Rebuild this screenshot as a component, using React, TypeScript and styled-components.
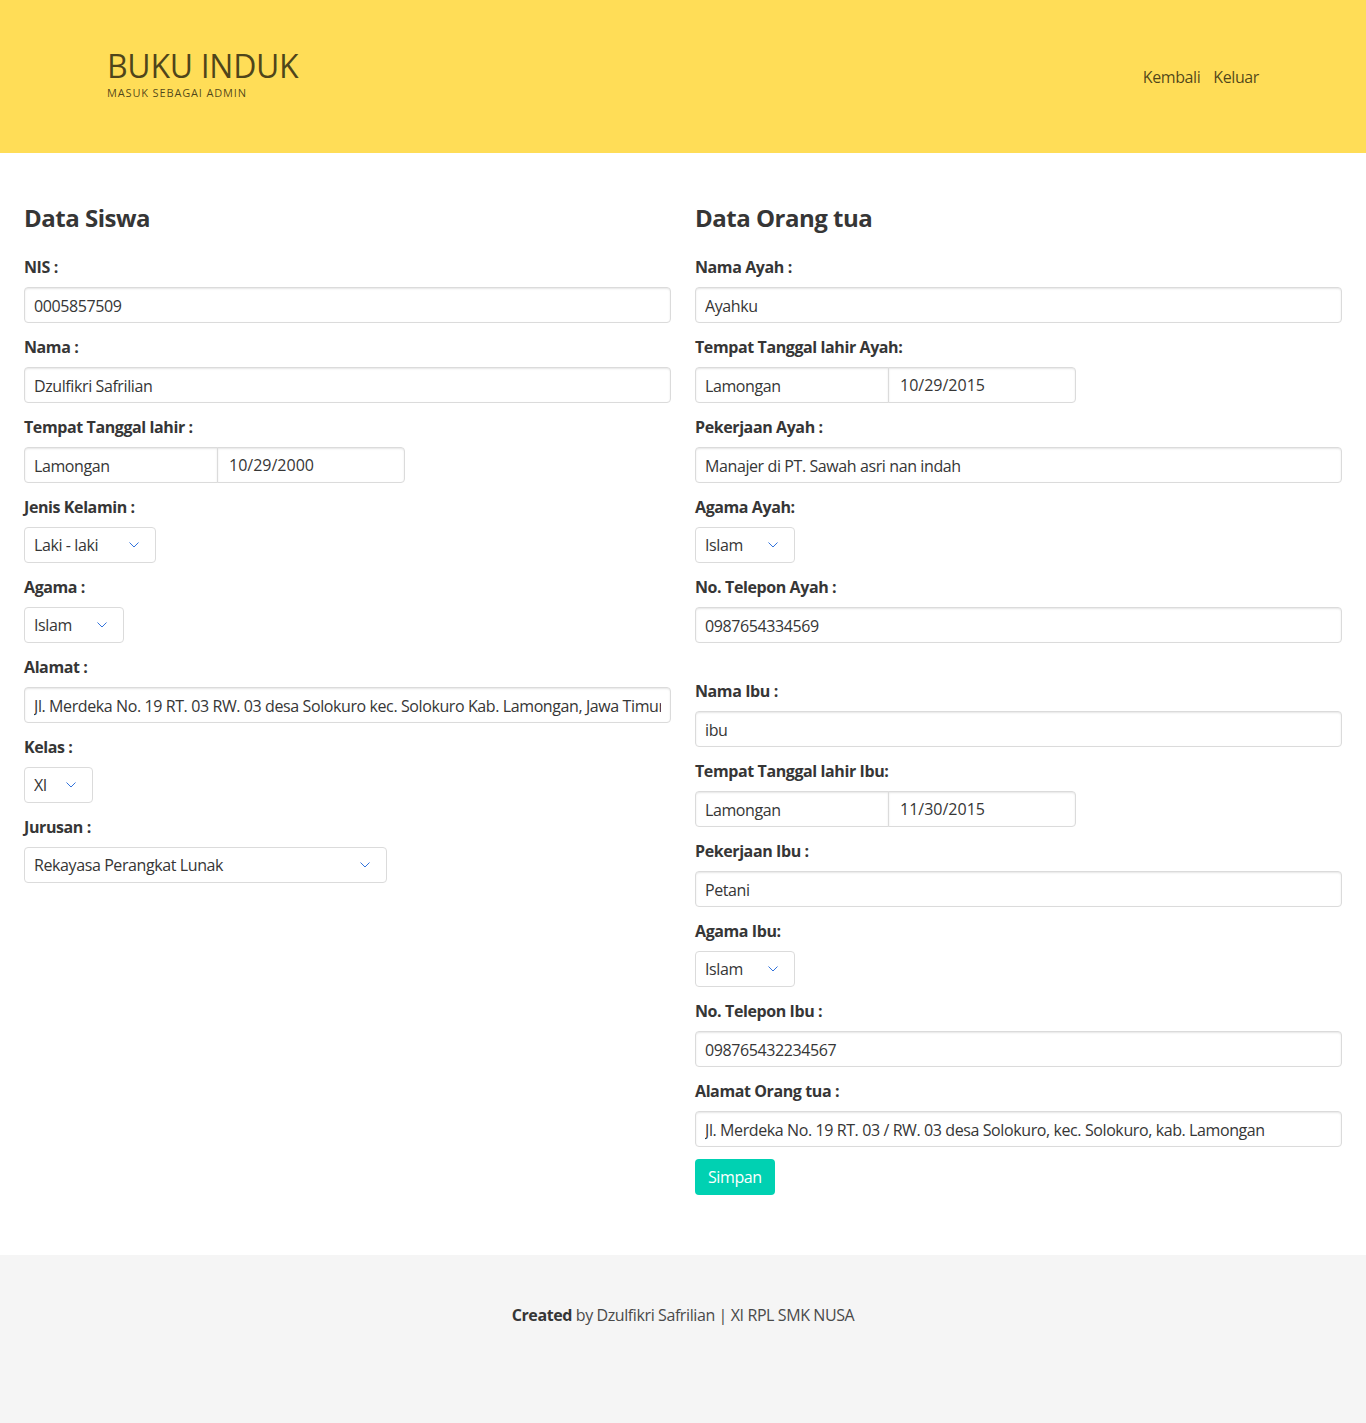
import React from "react";
import styled, { createGlobalStyle } from "styled-components";

const Global = createGlobalStyle`
  html, body { margin: 0; padding: 0; background: #fff; }
  body {
    font-family: "Open Sans", "Noto Sans", "Liberation Sans", sans-serif;
    font-size: 16px;
    line-height: 1.5;
    letter-spacing: -0.4px;
    color: #4a4a4a;
  }
  * { box-sizing: border-box; }
`;

const Hero = styled.header`
  background: #ffdd57;
  height: 153px;
`;

const HeroInner = styled.div`
  width: 1152px;
  margin: 0 auto;
  padding-top: 50px;
  display: flex;
  justify-content: space-between;
  align-items: flex-start;
`;

const Brand = styled.div`
  display: flex;
  flex-direction: column;
`;

const BrandTitle = styled.h1`
  margin: 0;
  font-size: 32px;
  line-height: 32px;
  font-weight: 400;
  letter-spacing: -0.3px;
  color: rgba(0, 0, 0, 0.7);
`;

const BrandSub = styled.p`
  margin: 3px 0 0;
  font-size: 11px;
  line-height: 15px;
  letter-spacing: 0.85px;
  text-transform: uppercase;
  color: rgba(0, 0, 0, 0.7);
`;

const Nav = styled.nav`
  display: flex;
  gap: 13px;
  margin-top: 15px;
`;

const NavLink = styled.a`
  color: rgba(0, 0, 0, 0.7);
  font-size: 16px;
  line-height: 24px;
  text-decoration: none;
`;

const Section = styled.main`
  padding: 51px 24px 60px;
  display: grid;
  grid-template-columns: 1fr 1fr;
  column-gap: 24px;
  align-items: start;
`;

const Column = styled.div`
  display: flex;
  flex-direction: column;
`;

const Heading = styled.h2`
  margin: 0 0 24px;
  font-size: 24px;
  line-height: 27px;
  font-weight: 700;
  letter-spacing: -0.5px;
  color: #363636;
`;

const Field = styled.div<{ $gapAfter?: number }>`
  margin-bottom: ${(p) => 12 + (p.$gapAfter ?? 0)}px;
`;

const Label = styled.label`
  display: block;
  margin-bottom: 8px;
  font-size: 16px;
  line-height: 24px;
  font-weight: 700;
  color: #363636;
`;

const Input = styled.input`
  display: block;
  width: 100%;
  height: 36px;
  padding: 2px 9px 0;
  border: 1px solid #dbdbdb;
  border-radius: 4px;
  box-shadow: inset 0 1px 2px rgba(10, 10, 10, 0.1);
  background: #fff;
  font-family: inherit;
  font-size: 16px;
  letter-spacing: inherit;
  color: #363636;
  outline: none;
`;

const DateGroup = styled.div`
  display: flex;
`;

const PlaceInput = styled(Input)`
  width: 194px;
  border-radius: 4px 0 0 4px;
`;

const DateInput = styled(Input)`
  width: 188px;
  margin-left: -1px;
  padding-left: 11px;
  padding-top: 0;
  letter-spacing: 0;
  border-radius: 0 4px 4px 0;
`;

const SelectWrap = styled.div<{ $w: number }>`
  position: relative;
  width: ${(p) => p.$w}px;
  height: 36px;
`;

const Select = styled.select`
  appearance: none;
  -webkit-appearance: none;
  width: 100%;
  height: 36px;
  padding: 0 40px 0 9px;
  border: 1px solid #dbdbdb;
  border-radius: 4px;
  background: #fff;
  font-family: inherit;
  font-size: 16px;
  letter-spacing: inherit;
  color: #363636;
  outline: none;
`;

const Arrow = styled.svg`
  position: absolute;
  right: 17px;
  top: 15px;
  width: 10px;
  height: 6px;
  pointer-events: none;
`;

const Button = styled.button`
  align-self: flex-start;
  height: 36px;
  padding: 0 12px;
  border: 1px solid transparent;
  border-radius: 4px;
  background: #00d1b2;
  color: #fff;
  font-family: inherit;
  font-size: 16px;
  letter-spacing: inherit;
  cursor: pointer;
`;

const Footer = styled.footer`
  background: #f5f5f5;
  padding: 48px 24px 96px;
  text-align: center;
  font-size: 16px;
  line-height: 24px;
  color: #4a4a4a;
`;

const Strong = styled.strong`
  color: #363636;
  font-weight: 700;
`;

const SelectBox: React.FC<{ w: number; value: string; options: string[] }> = ({ w, value, options }) => (
  <SelectWrap $w={w}>
    <Select defaultValue={value}>
      {options.map((o) => (
        <option key={o}>{o}</option>
      ))}
    </Select>
    <Arrow viewBox="0 0 10 6">
      <path d="M0.5 0.5 L5 5 L9.5 0.5" fill="none" stroke="#3273dc" strokeWidth="1" />
    </Arrow>
  </SelectWrap>
);

const TextField: React.FC<{ label: string; value: string; gapAfter?: number }> = ({ label, value, gapAfter }) => (
  <Field $gapAfter={gapAfter}>
    <Label>{label}</Label>
    <Input type="text" defaultValue={value} />
  </Field>
);

const DateField: React.FC<{ label: string; place: string; date: string }> = ({ label, place, date }) => (
  <Field>
    <Label>{label}</Label>
    <DateGroup>
      <PlaceInput type="text" defaultValue={place} />
      <DateInput type="text" defaultValue={date} />
    </DateGroup>
  </Field>
);

const SelectField: React.FC<{ label: string; w: number; value: string; options: string[] }> = ({ label, w, value, options }) => (
  <Field>
    <Label>{label}</Label>
    <SelectBox w={w} value={value} options={options} />
  </Field>
);

const agama = ["Islam", "Kristen", "Katolik", "Hindu", "Buddha"];

export default function App() {
  return (
    <>
      <Global />
      <Hero>
        <HeroInner>
          <Brand>
            <BrandTitle>BUKU INDUK</BrandTitle>
            <BrandSub>Masuk sebagai admin</BrandSub>
          </Brand>
          <Nav>
            <NavLink href="#">Kembali</NavLink>
            <NavLink href="#">Keluar</NavLink>
          </Nav>
        </HeroInner>
      </Hero>
      <Section>
        <Column>
          <Heading>Data Siswa</Heading>
          <TextField label="NIS :" value="0005857509" />
          <TextField label="Nama :" value="Dzulfikri Safrilian" />
          <DateField label="Tempat Tanggal lahir :" place="Lamongan" date="10/29/2000" />
          <SelectField label="Jenis Kelamin :" w={132} value="Laki - laki" options={["Laki - laki", "Perempuan"]} />
          <SelectField label="Agama :" w={100} value="Islam" options={agama} />
          <TextField
            label="Alamat :"
            value="Jl. Merdeka No. 19 RT. 03 RW. 03 desa Solokuro kec. Solokuro Kab. Lamongan, Jawa Timur"
          />
          <SelectField label="Kelas :" w={69} value="XI" options={["X", "XI", "XII"]} />
          <SelectField
            label="Jurusan :"
            w={363}
            value="Rekayasa Perangkat Lunak"
            options={["Rekayasa Perangkat Lunak", "Teknik Komputer dan Jaringan", "Multimedia"]}
          />
        </Column>
        <Column>
          <Heading>Data Orang tua</Heading>
          <TextField label="Nama Ayah :" value="Ayahku" />
          <DateField label="Tempat Tanggal lahir Ayah:" place="Lamongan" date="10/29/2015" />
          <TextField label="Pekerjaan Ayah :" value="Manajer di PT. Sawah asri nan indah" />
          <SelectField label="Agama Ayah:" w={100} value="Islam" options={agama} />
          <TextField label="No. Telepon Ayah :" value="0987654334569" gapAfter={24} />
          <TextField label="Nama Ibu :" value="ibu" />
          <DateField label="Tempat Tanggal lahir Ibu:" place="Lamongan" date="11/30/2015" />
          <TextField label="Pekerjaan Ibu :" value="Petani" />
          <SelectField label="Agama Ibu:" w={100} value="Islam" options={agama} />
          <TextField label="No. Telepon Ibu :" value="098765432234567" />
          <TextField
            label="Alamat Orang tua :"
            value="Jl. Merdeka No. 19 RT. 03 / RW. 03 desa Solokuro, kec. Solokuro, kab. Lamongan"
          />
          <Button type="button">Simpan</Button>
        </Column>
      </Section>
      <Footer>
        <Strong>Created</Strong> by Dzulfikri Safrilian | XI RPL SMK NUSA
      </Footer>
    </>
  );
}
